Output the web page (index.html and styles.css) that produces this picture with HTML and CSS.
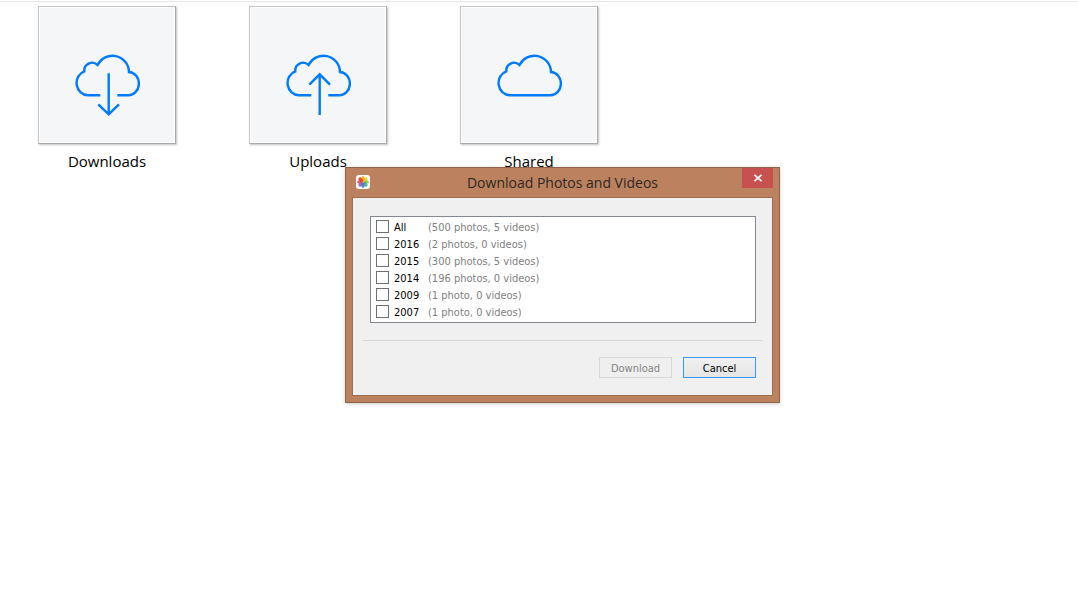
FILE: index.html
```html
<!DOCTYPE html>
<html lang="en">
<head>
<meta charset="UTF-8">
<meta name="viewport" content="width=device-width, initial-scale=1.0">
<title>iCloud Photos</title>
<link rel="stylesheet" href="styles.css">
</head>
<body>
<main class="folders">
  <a class="folder" href="#downloads">
    <span class="tile">
      <svg class="cloud" viewBox="0 0 66 64" aria-hidden="true">
        <path d="M26.3 42.2H14A11.2 12.2 0 0 1 10.3 18.4A7.8 7.8 0 0 1 23.5 12A16.6 16.6 0 0 1 55 19A10.4 11.6 0 0 1 54 42.2H43.3"/>
        <path d="M34.7 20.3V61.5M24.3 51.3L34.7 61.3L45 51.3"/>
      </svg>
    </span>
    <span class="name">Downloads</span>
  </a>
  <a class="folder" href="#uploads">
    <span class="tile">
      <svg class="cloud" viewBox="0 0 66 64" aria-hidden="true">
        <path d="M26.3 42.2H14A11.2 12.2 0 0 1 10.3 18.4A7.8 7.8 0 0 1 23.5 12A16.6 16.6 0 0 1 55 19A10.4 11.6 0 0 1 54 42.2H43.3"/>
        <path d="M34.7 62V21M24.3 31.7L34.7 21.3L45 31.7"/>
      </svg>
    </span>
    <span class="name">Uploads</span>
  </a>
  <a class="folder" href="#shared">
    <span class="tile">
      <svg class="cloud" viewBox="0 0 66 64" aria-hidden="true">
        <path d="M14 42.2A11.2 12.2 0 0 1 10.3 18.4A7.8 7.8 0 0 1 23.5 12A16.6 16.6 0 0 1 55 19A10.4 11.6 0 0 1 54 42.2Z"/>
      </svg>
    </span>
    <span class="name">Shared</span>
  </a>
</main>

<section class="window" role="dialog" aria-labelledby="window-title">
  <header class="titlebar">
    <svg class="app-icon" viewBox="0 0 14 14" aria-hidden="true">
      <rect width="14" height="14" rx="3" fill="#fff"/>
      <g fill-opacity="0.9">
        <ellipse cx="7" cy="3.8" rx="1.8" ry="2.8" fill="#f9a01b"/>
        <ellipse cx="7" cy="3.8" rx="1.8" ry="2.8" fill="#e8cf10" transform="rotate(45 7 7)"/>
        <ellipse cx="7" cy="3.8" rx="1.8" ry="2.8" fill="#8cc63f" transform="rotate(90 7 7)"/>
        <ellipse cx="7" cy="3.8" rx="1.8" ry="2.8" fill="#3fae85" transform="rotate(135 7 7)"/>
        <ellipse cx="7" cy="3.8" rx="1.8" ry="2.8" fill="#4480cc" transform="rotate(180 7 7)"/>
        <ellipse cx="7" cy="3.8" rx="1.8" ry="2.8" fill="#9560b0" transform="rotate(225 7 7)"/>
        <ellipse cx="7" cy="3.8" rx="1.8" ry="2.8" fill="#dd4f7c" transform="rotate(270 7 7)"/>
        <ellipse cx="7" cy="3.8" rx="1.8" ry="2.8" fill="#ee3524" transform="rotate(315 7 7)"/>
      </g>
    </svg>
    <h1 class="title" id="window-title">Download Photos and Videos</h1>
    <button class="close" type="button" aria-label="Close">
      <svg viewBox="0 0 8 8" aria-hidden="true"><path d="M0.5 0.8L7.5 7.2M7.5 0.8L0.5 7.2"/></svg>
    </button>
  </header>
  <form class="content">
    <ul class="years">
      <li><label><input type="checkbox"><span class="year">All</span><span class="count">(500 photos, 5 videos)</span></label></li>
      <li><label><input type="checkbox"><span class="year">2016</span><span class="count">(2 photos, 0 videos)</span></label></li>
      <li><label><input type="checkbox"><span class="year">2015</span><span class="count">(300 photos, 5 videos)</span></label></li>
      <li><label><input type="checkbox"><span class="year">2014</span><span class="count">(196 photos, 0 videos)</span></label></li>
      <li><label><input type="checkbox"><span class="year">2009</span><span class="count">(1 photo, 0 videos)</span></label></li>
      <li><label><input type="checkbox"><span class="year">2007</span><span class="count">(1 photo, 0 videos)</span></label></li>
    </ul>
    <hr>
    <div class="actions">
      <button type="submit" disabled>Download</button>
      <button class="default" type="button">Cancel</button>
    </div>
  </form>
</section>
</body>
</html>
```
FILE: styles.css
```css
* {
  box-sizing: border-box;
}
body {
  margin: 0;
  padding-top: 1px;
  background: #fff;
  font-family: "Open Sans", "Noto Sans", sans-serif;
}

/* folder tiles */
.folders {
  display: flex;
  flex-wrap: wrap;
  gap: 24px 73px;
  padding: 4px 38px;
  border-top: 1px solid #e6e6e6;
}
.folder {
  display: flex;
  flex-direction: column;
  align-items: center;
  gap: 5px;
  color: #000;
  text-decoration: none;
}
.tile {
  display: flex;
  justify-content: center;
  width: 138px;
  height: 138px;
  padding-top: 46px;
  background: #f5f6f8;
  border: 1px solid #c4c4c4;
  border-right-color: #aaa;
  border-bottom-color: #aaa;
  box-shadow: inset 0 0 0 1px #fff, 1px 1px 2px rgba(0, 0, 0, 0.25);
}
.cloud {
  width: 66px;
  height: 64px;
  fill: none;
  stroke: #007aff;
  stroke-width: 2.4;
}
.name {
  font-size: 15px;
  line-height: 24px;
}

/* download window */
.window {
  position: absolute;
  left: 345px;
  top: 167px;
  width: 435px;
  padding: 0 6px 6px;
  background: #bc825f;
  border: 1px solid #8f6249;
  box-shadow: 0 1px 4px rgba(0, 0, 0, 0.2);
}
.titlebar {
  display: grid;
  grid-template-columns: 31px 1fr 31px;
  height: 29px;
}
.app-icon {
  width: 14px;
  height: 14px;
  margin: 7px 4px;
}
.title {
  margin: 0;
  font-size: 14px;
  font-weight: 400;
  line-height: 29px;
  text-align: center;
  color: #2f2621;
}
.close {
  display: flex;
  align-items: center;
  justify-content: center;
  height: 20px;
  padding: 0;
  background: #c75050;
  border: 0;
}
.close svg {
  width: 8px;
  height: 8px;
  fill: none;
  stroke: #fff;
  stroke-width: 1.6;
}
.content {
  padding: 18px 9px 17px 10px;
  background: #f0f0f0;
  border: 1px solid #a06c4e;
  font-family: "DejaVu Sans Condensed", "DejaVu Sans", sans-serif;
  font-size: 11px;
}
.years {
  margin: 0 7px;
  padding: 1px 5px 2px;
  list-style: none;
  background: #fff;
  border: 1px solid #828790;
}
.years label {
  display: flex;
  align-items: center;
  height: 17px;
}
.years span {
  padding-top: 2px;
}
.years input {
  appearance: none;
  width: 13px;
  height: 13px;
  margin: 0 5px 0 0;
  background: #fff;
  border: 1px solid #707070;
}
.years input:checked {
  background: #3399ff;
}
.year {
  width: 34px;
  color: #000;
}
.count {
  color: #808080;
}
hr {
  margin: 17px 0 16px;
  border: 0;
  border-top: 1px solid #d5d5d5;
}
.actions {
  display: flex;
  justify-content: flex-end;
  gap: 11px;
  padding: 0 7px;
}
.actions button {
  width: 73px;
  height: 21px;
  padding: 1px 0 0;
  font: inherit;
  color: #000;
  background: linear-gradient(#f0f0f0, #e5e5e5);
  border: 1px solid #acacac;
}
.actions .default {
  border-color: #3399ff;
}
.actions button:disabled {
  color: #838383;
  background: #efefef;
  border-color: #d9d9d9;
}
```
